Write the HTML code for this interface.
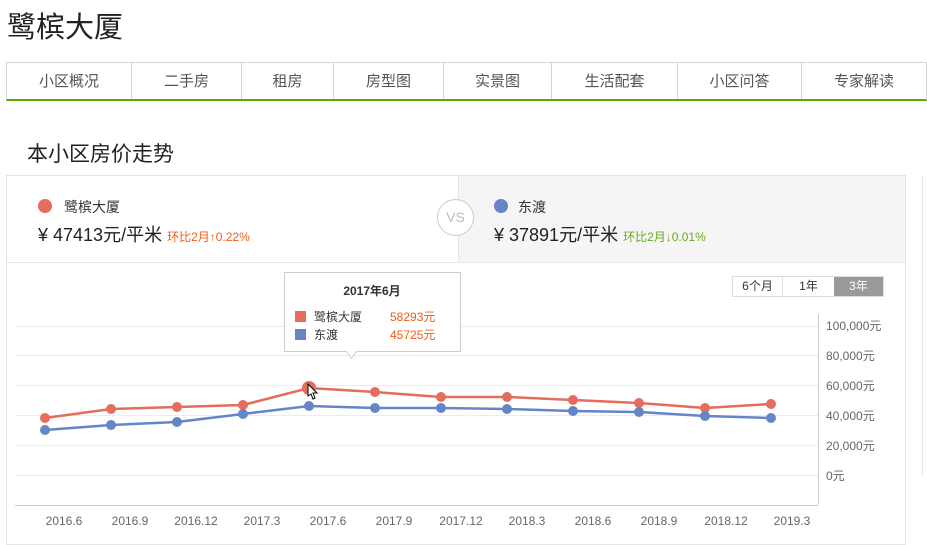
<!DOCTYPE html>
<html><head><meta charset="utf-8"><style>
*{margin:0;padding:0;box-sizing:border-box}
body{width:927px;height:541px;overflow:hidden;background:#fff;font-family:"Liberation Sans","Noto Sans CJK SC",sans-serif;color:#333;position:relative}
.a{position:absolute}
h1{position:absolute;left:7px;top:4px;font-size:29px;font-weight:normal;color:#222}
.nav{position:absolute;left:6px;top:62px;width:921px;height:39px;border:1px solid #d5d5d5;border-bottom:2px solid #5ea900;display:flex}
.nav div{border-right:1px solid #d5d5d5;text-align:center;line-height:37px;font-size:15px;color:#555}
.nav div:last-child{border-right:none}
</style></head><body>
<h1>鹭槟大厦</h1>
<div class="nav">
<div style="width:125px">小区概况</div><div style="width:110px">二手房</div><div style="width:92px">租房</div><div style="width:110px">房型图</div><div style="width:108px">实景图</div><div style="width:126px">生活配套</div><div style="width:124px">小区问答</div><div style="flex:1">专家解读</div>
</div>
<div class="a" style="left:27px;top:138px;font-size:21px;color:#222">本小区房价走势</div>
<div class="a" style="left:6px;top:175px;width:900px;height:370px;border:1px solid #e6e6e6"></div>
<div class="a" style="left:922px;top:175px;width:1px;height:300px;background:#e6e6e6"></div>
<div class="a" style="left:458px;top:176px;width:447px;height:86px;background:#f5f5f5;border-left:1px solid #e6e6e6"></div>
<div class="a" style="left:6px;top:262px;width:900px;height:1px;background:#e6e6e6"></div>
<div class="a" style="left:38px;top:199px;width:14px;height:14px;border-radius:50%;background:#e46d5d"></div>
<div class="a" style="left:64px;top:197px;font-size:14px">鹭槟大厦</div>
<div class="a" style="left:38px;top:221px;font-size:18px;color:#222">¥ 47413元/平米 <span style="font-size:12px;color:#f25c16">环比2月↑0.22%</span></div>
<div class="a" style="left:437px;top:199px;width:37px;height:37px;border-radius:50%;border:1px solid #ccc;background:#fff;color:#bbb;font-size:14px;text-align:center;line-height:35px">VS</div>
<div class="a" style="left:494px;top:199px;width:14px;height:14px;border-radius:50%;background:#6585c9"></div>
<div class="a" style="left:518px;top:197px;font-size:14px">东渡</div>
<div class="a" style="left:494px;top:221px;font-size:18px;color:#222">¥ 37891元/平米 <span style="font-size:12px;color:#6aaa1e">环比2月↓0.01%</span></div>
<div class="a" style="left:732px;top:276px;width:152px;height:21px;border:1px solid #ddd;display:flex;font-size:12px;line-height:19px;text-align:center">
<div style="width:50px;border-right:1px solid #ddd">6个月</div><div style="width:51px">1年</div><div style="flex:1;background:#999;color:#fff">3年</div></div>
<svg class="a" style="left:0;top:0" width="927" height="541">
<g stroke="#ececec" stroke-width="1">
<line x1="15" y1="326.5" x2="818" y2="326.5"/><line x1="15" y1="355.5" x2="818" y2="355.5"/><line x1="15" y1="385.5" x2="818" y2="385.5"/><line x1="15" y1="415.5" x2="818" y2="415.5"/><line x1="15" y1="445.5" x2="818" y2="445.5"/><line x1="15" y1="475.5" x2="818" y2="475.5"/>
</g>
<line x1="15" y1="505.5" x2="818" y2="505.5" stroke="#ccc"/>
<line x1="818.5" y1="314" x2="818.5" y2="505" stroke="#ccc"/>
<g font-size="12" fill="#666">
<text x="826" y="330">100,000元</text><text x="826" y="360">80,000元</text><text x="826" y="390">60,000元</text><text x="826" y="420">40,000元</text><text x="826" y="450">20,000元</text><text x="826" y="480">0元</text>
</g>
<g font-size="12" fill="#666" text-anchor="middle">
<text x="64" y="525">2016.6</text><text x="130" y="525">2016.9</text><text x="196" y="525">2016.12</text><text x="262" y="525">2017.3</text><text x="328" y="525">2017.6</text><text x="394" y="525">2017.9</text><text x="461" y="525">2017.12</text><text x="527" y="525">2018.3</text><text x="593" y="525">2018.6</text><text x="659" y="525">2018.9</text><text x="726" y="525">2018.12</text><text x="792" y="525">2019.3</text>
</g>
<polyline fill="none" stroke="#e46d5d" stroke-width="2.5" points="45,418 111,409 177,407 243,405 309,388 375,392 441,397 507,397 573,400 639,403 705,408 771,404"/>
<polyline fill="none" stroke="#6585c9" stroke-width="2.5" points="45,430 111,425 177,422 243,414 309,406 375,408 441,408 507,409 573,411 639,412 705,416 771,418"/>
<g fill="#e46d5d"><circle cx="45" cy="418" r="5"/><circle cx="111" cy="409" r="5"/><circle cx="177" cy="407" r="5"/><circle cx="243" cy="405" r="5"/><circle cx="309" cy="388" r="7"/><circle cx="375" cy="392" r="5"/><circle cx="441" cy="397" r="5"/><circle cx="507" cy="397" r="5"/><circle cx="573" cy="400" r="5"/><circle cx="639" cy="403" r="5"/><circle cx="705" cy="408" r="5"/><circle cx="771" cy="404" r="5"/></g>
<g fill="#6585c9"><circle cx="45" cy="430" r="5"/><circle cx="111" cy="425" r="5"/><circle cx="177" cy="422" r="5"/><circle cx="243" cy="414" r="5"/><circle cx="309" cy="406" r="5"/><circle cx="375" cy="408" r="5"/><circle cx="441" cy="408" r="5"/><circle cx="507" cy="409" r="5"/><circle cx="573" cy="411" r="5"/><circle cx="639" cy="412" r="5"/><circle cx="705" cy="416" r="5"/><circle cx="771" cy="418" r="5"/></g>
<path d="M308 384 v12 l3 -2 l2 5 l2 -1 l-2 -5 h4 z" fill="#fff" stroke="#000" stroke-width="1"/>
<path d="M284.5 272.5 h176 v79 h-104 l-5 7 l-5 -7 h-62 z" fill="#fff" stroke="#ccc"/>
<text x="372" y="295" font-size="12" font-weight="bold" fill="#333" text-anchor="middle">2017年6月</text>
<rect x="295" y="311" width="11" height="11" fill="#e46d5d"/><rect x="295" y="329" width="11" height="11" fill="#6585c9"/>
<text x="314" y="321" font-size="12" fill="#333">鹭槟大厦</text><text x="314" y="339" font-size="12" fill="#333">东渡</text>
<text x="390" y="321" font-size="12" fill="#f25c16">58293元</text><text x="390" y="339" font-size="12" fill="#f25c16">45725元</text>
</svg>
</body></html>
